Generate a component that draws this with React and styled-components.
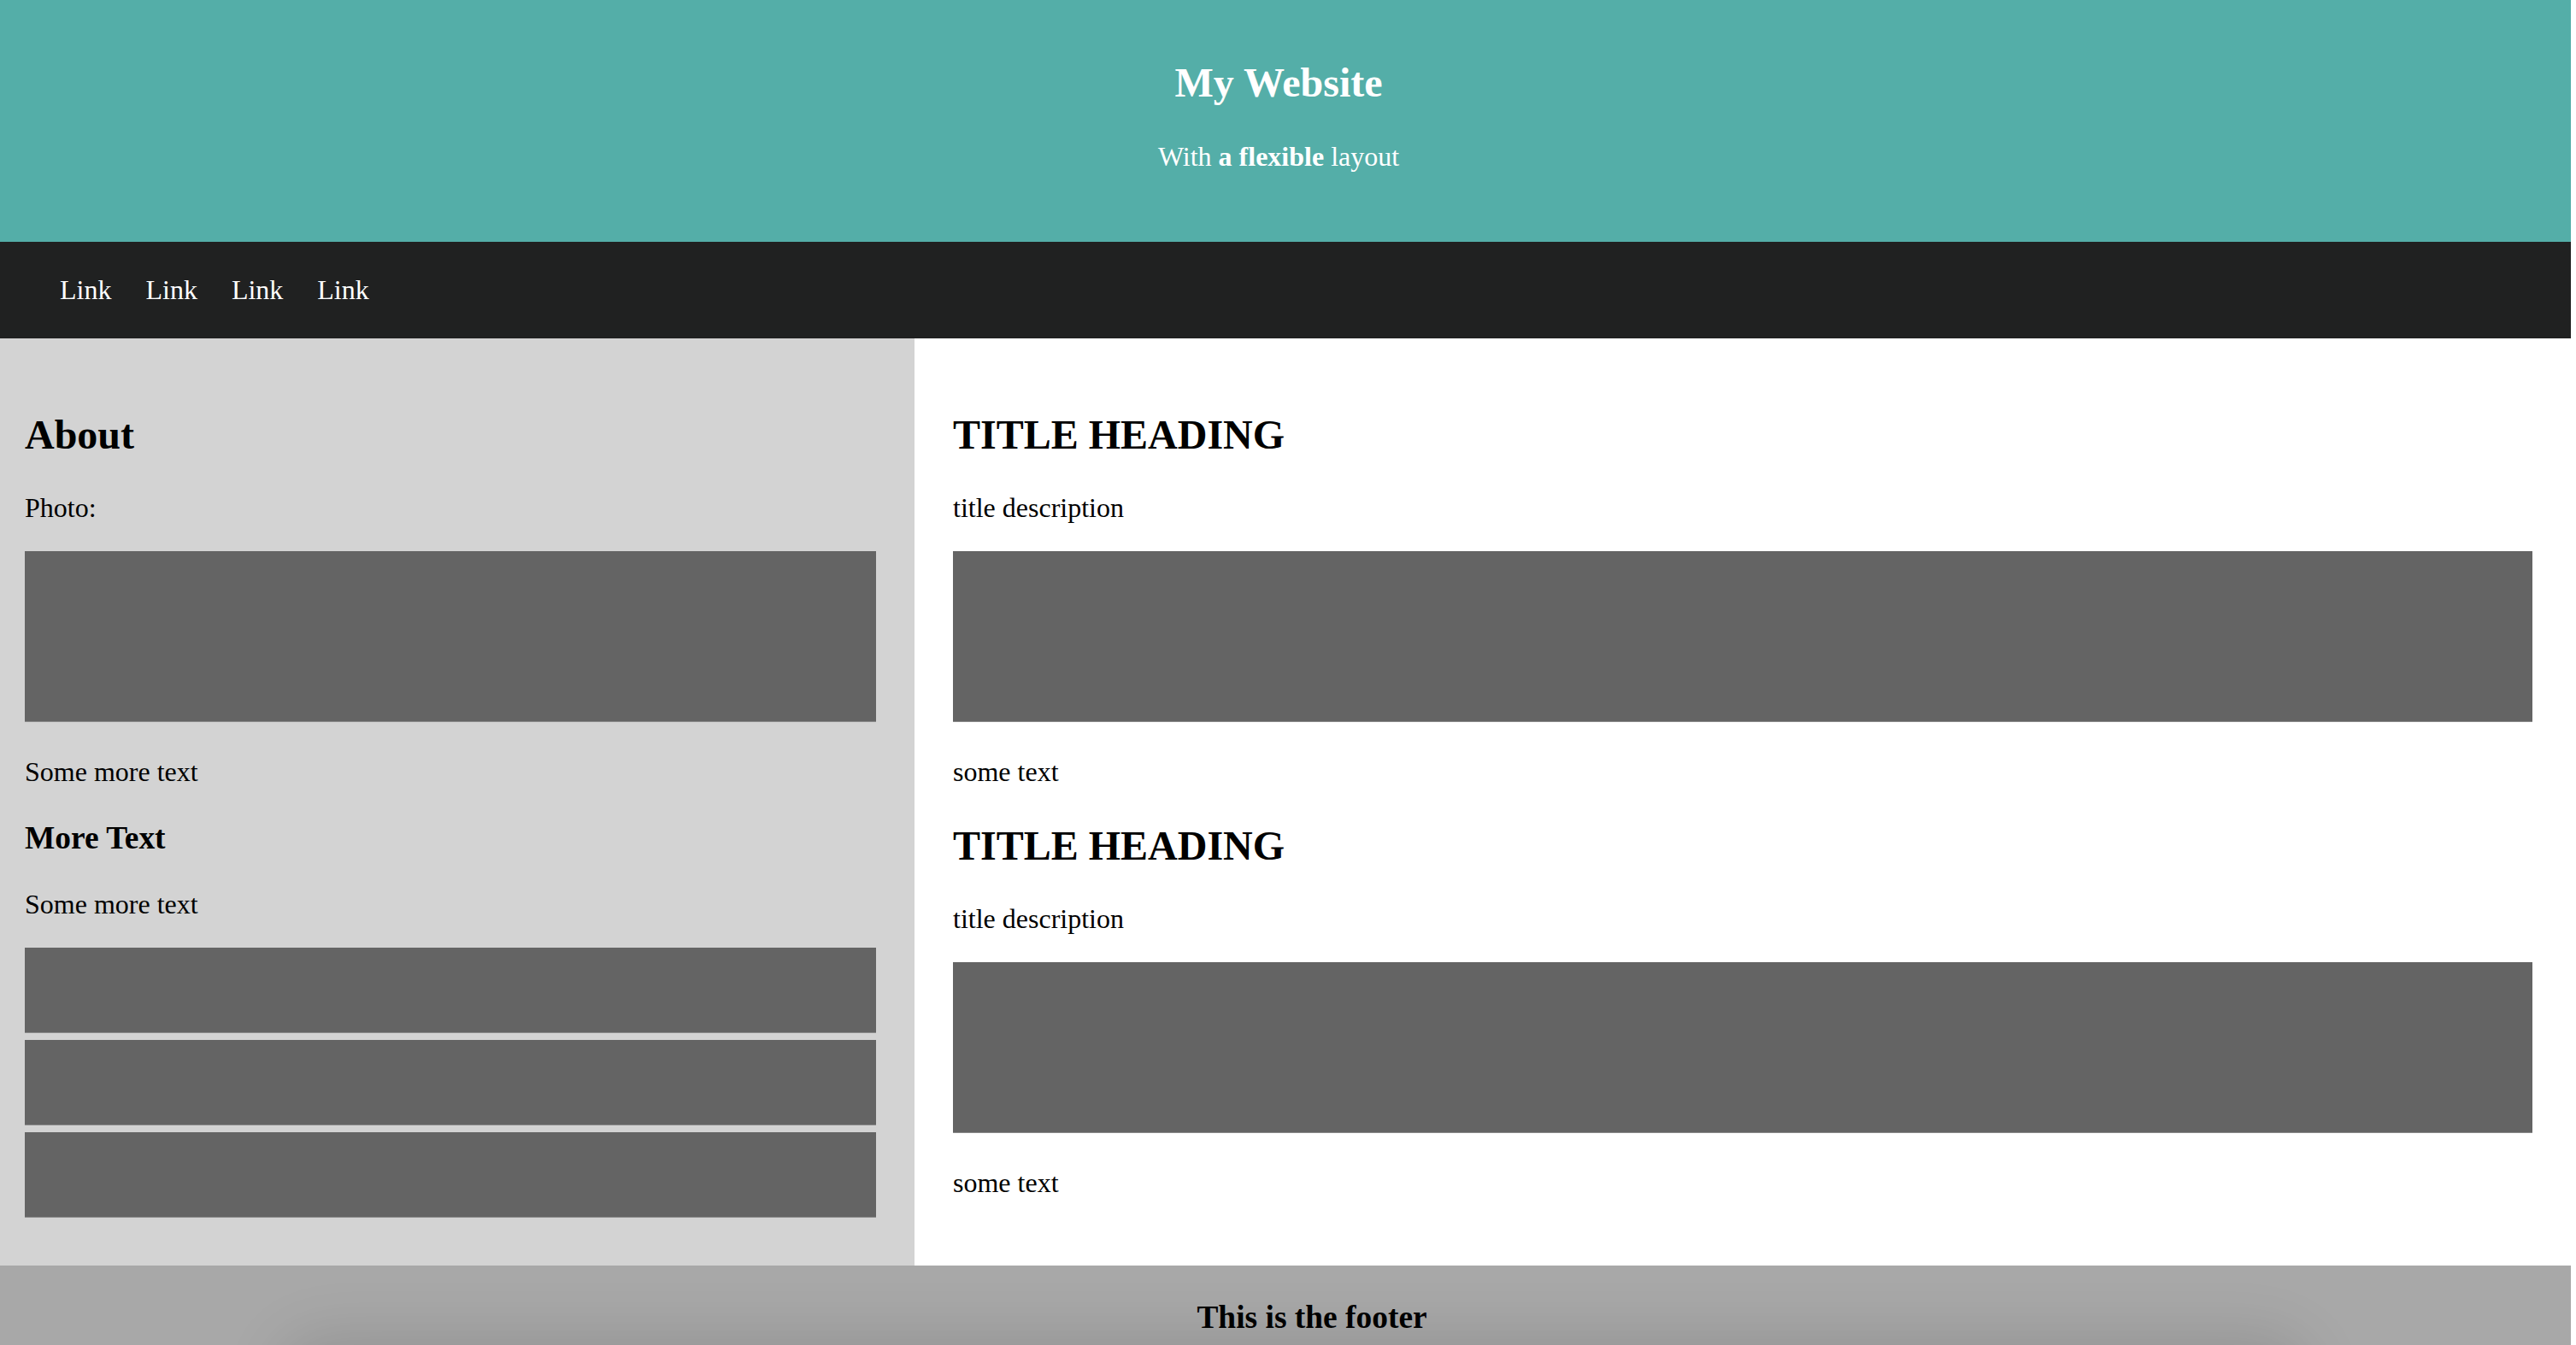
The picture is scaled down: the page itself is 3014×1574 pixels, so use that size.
import React from 'react';
import styled, { createGlobalStyle } from 'styled-components';

const GlobalStyle = createGlobalStyle`
  html, body {
    margin: 0;
    padding: 0;
    background: #fff;
    overflow: hidden;
  }

  body {
    font-family: "Liberation Serif", "Times New Roman", serif;
    font-size: 32px;
    color: #000;
  }
`;

const Page = styled.div`
  width: 3008px;
`;

const Header = styled.header`
  box-sizing: border-box;
  height: 283px;
  padding: 69px 16px 0 0;
  background: #54aea8;
  color: #fff;
  text-align: center;
`;

const SiteTitle = styled.h1`
  margin: 0 0 41px;
  font-size: 48px;
  font-weight: 700;
`;

const Tagline = styled.p`
  margin: 0;
  font-size: 32px;
`;

const Nav = styled.nav`
  display: flex;
  padding: 0 50px;
  background: #202121;
`;

const NavLink = styled.a`
  padding: 38px 20px;
  color: #fff;
  font-size: 32px;
  text-decoration: none;
`;

const Row = styled.main`
  display: flex;
  align-items: stretch;
`;

const Column = styled.section`
  box-sizing: border-box;
  padding: 45px 45px 46px ${(p) => (p.$side ? '29px' : '45px')};
  background: ${(p) => (p.$side ? '#d3d3d3' : '#fff')};
  ${(p) => (p.$side ? 'width: 1070px; flex: none;' : 'flex: 1;')}
`;

const Heading = styled.h2`
  margin: 40px 0;
  font-size: 48px;
  font-weight: 700;
`;

const SubHeading = styled.h3`
  margin: 37.44px 0;
  font-size: 37.44px;
  font-weight: 700;
`;

const Text = styled.p`
  margin: 32px 0;
  font-size: 32px;
`;

const FakeImg = styled.div`
  height: ${(p) => (p.$small ? '100px' : '200px')};
  margin-bottom: ${(p) => (p.$small ? '8px' : '40px')};
  background: #646464;
  box-shadow: inset 0 -1px 0 #8a8a8a;
`;

const Footer = styled.footer`
  position: relative;
  box-sizing: border-box;
  height: 94px;
  padding: 39px 0 0 62px;
  background: #a8a8a8;
  text-align: center;
  overflow: hidden;

  &::after {
    content: '';
    position: absolute;
    left: 350px;
    right: 330px;
    top: calc(100% + 14px);
    height: 60px;
    border-radius: 40px;
    box-shadow: 0 0 70px 26px rgba(0, 0, 0, 0.12);
  }
`;

const FooterText = styled.h3`
  position: relative;
  z-index: 1;
  margin: 0;
  font-size: 37.44px;
  font-weight: 700;
`;

const links = ['Link', 'Link', 'Link', 'Link'];

const Post = () => (
  <>
    <Heading>TITLE HEADING</Heading>
    <Text>title description</Text>
    <FakeImg />
    <Text>some text</Text>
  </>
);

const App = () => (
  <Page>
    <GlobalStyle />
    <Header>
      <SiteTitle>My Website</SiteTitle>
      <Tagline>
        With <b>a flexible</b> layout
      </Tagline>
    </Header>

    <Nav>
      {links.map((label, i) => (
        <NavLink key={i} href="#">
          {label}
        </NavLink>
      ))}
    </Nav>

    <Row>
      <Column $side>
        <Heading>About</Heading>
        <Text>Photo:</Text>
        <FakeImg />
        <Text>Some more text</Text>
        <SubHeading>More Text</SubHeading>
        <Text>Some more text</Text>
        <FakeImg $small />
        <FakeImg $small />
        <FakeImg $small />
      </Column>
      <Column>
        <Post />
        <Post />
      </Column>
    </Row>

    <Footer>
      <FooterText>This is the footer</FooterText>
    </Footer>
  </Page>
);

export default App;
